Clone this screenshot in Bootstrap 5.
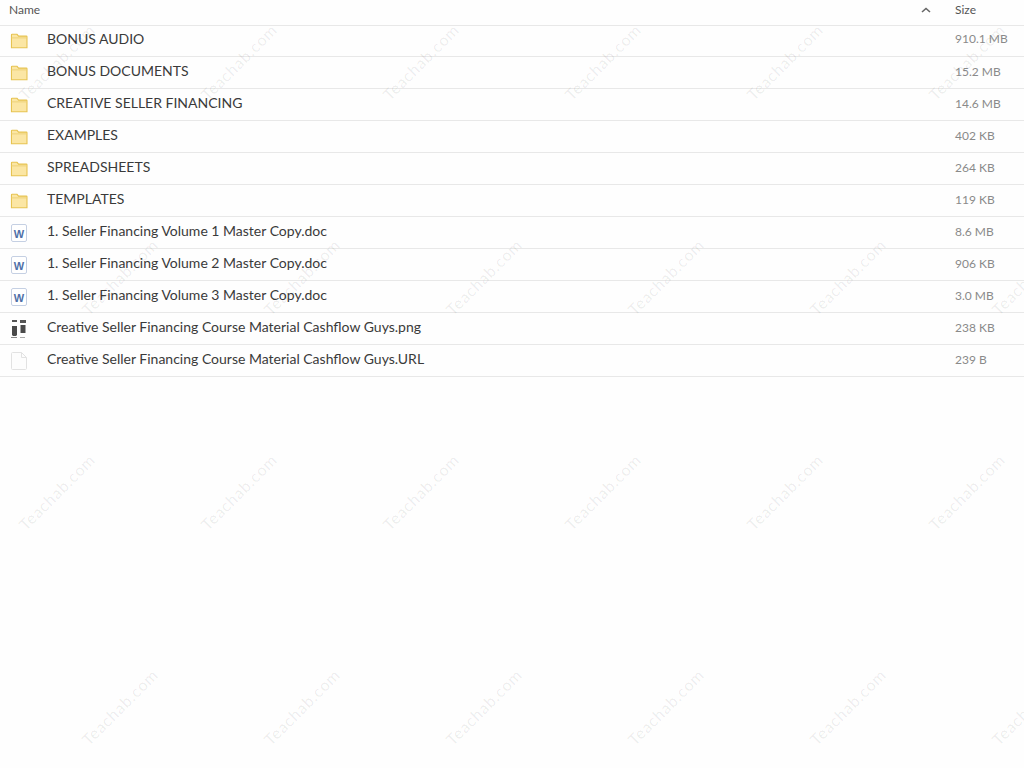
<!DOCTYPE html>
<html lang="en">
<head>
  <meta charset="UTF-8" />
  <meta name="viewport" content="width=device-width, initial-scale=1.0"/>
  <title>Files</title>
  <link href="https://cdn.jsdelivr.net/npm/bootstrap@5.3.3/dist/css/bootstrap.min.css" rel="stylesheet" />
  <style>
    body {
      font-family: Lato, "Liberation Sans", sans-serif;
      background-color: #fefefe;
      height: 768px;
      overflow: hidden;
    }
    .file-head {
      height: 26px;
      padding-bottom: 6px;
      font-size: 12px;
      color: #555;
      border-bottom: 1px solid #e8e8e8;
    }
    .file-row {
      height: 32px;
      font-size: 14px;
      color: #3a3a3a;
      border-bottom: 1px solid #e8e8e8;
    }
    .file-row:first-child { height: 31px; }
    .name-cell { padding-bottom: 4px; }
    .file-row .size-cell { padding-bottom: 2px; }
    .file-row:first-child .name-cell { padding-bottom: 6px; }
    .file-row:first-child .size-cell { padding-bottom: 4px; }
    .name-head { padding-left: 9px; }
    .sort-mark { width: 10px; height: 6px; margin-right: 24px; }
    .size-cell { width: 69px; flex: none; font-size: 12px; color: #8a8a8a; }
    .head-size { color: #555; }
    .icon-cell { width: 47px; flex: none; padding-left: 10px; }
    .water-layer { inset: 0; pointer-events: none; }
    .water-row { height: 215px; margin-left: -34px; }
    .water-row.shifted { margin-left: 29px; }
    .water-row.first { margin-top: -46px; }
    .water-mark {
      width: 182px;
      flex: none;
      text-align: center;
      font-size: 16px;
      letter-spacing: .8px;
      color: rgba(0, 0, 0, .075);
      transform: rotate(-45deg);
    }
  </style>
</head>
<body>
  <div id="list">
    <div class="file-head d-flex align-items-center">
      <div class="name-head flex-grow-1">Name</div>
      <svg class="sort-mark" viewBox="0 0 10 6"><path d="M1 5l4-3.5L9 5" fill="none" stroke="#666" stroke-width="1.6"/></svg>
      <div class="size-cell head-size">Size</div>
    </div>
    <div id="rows"></div>
  </div>

  <div class="water-layer position-absolute overflow-hidden" id="water"></div>

  <svg width="0" height="0" class="position-absolute">
    <symbol id="i-folder" viewBox="0 0 20 18">
      <path d="M1.5 16.5V2.2c0-.4.3-.7.7-.7h5.6l1.7 2h8.8c.4 0 .7.3.7.7v12.3z" fill="#fbe6a4" stroke="#e6c24f" stroke-width="1.2"/>
      <path d="M1.5 5.5h17" stroke="#ecce72" fill="none"/>
    </symbol>
    <symbol id="i-word" viewBox="-1 0 17 18">
      <rect x=".5" y=".5" width="15" height="17" rx="1.5" fill="#fff" stroke="#c5d0e3"/>
      <text x="8" y="13.5" text-anchor="middle" font-family="Liberation Sans, sans-serif" font-weight="700" font-size="11" fill="#4f6fa8">W</text>
    </symbol>
    <symbol id="i-png" viewBox="0 0 17 18">
      <rect x="2" y="0" width="5" height="2" fill="#555"/>
      <rect x="10" y="0" width="6" height="3" fill="#555"/>
      <path d="M2 6h5v9l-1 1H3l-1-1z" fill="#4a4a4a"/>
      <rect x="10.5" y="5" width="5" height="8" fill="#4a4a4a"/>
      <rect x="1" y="17" width="6" height="1" fill="#888"/>
      <rect x="10" y="17" width="5" height="1" fill="#aaa"/>
    </symbol>
    <symbol id="i-blank" viewBox="-1 0 17 18">
      <path d="M1.5.5h9l5 5v11c0 .6-.4 1-1 1h-13c-.6 0-1-.4-1-1v-15c0-.6.4-1 1-1z" fill="#fdfdfd" stroke="#e2e2e2"/>
      <path d="M10.5.5v5h5" fill="none" stroke="#e2e2e2"/>
    </symbol>
  </svg>

  <script src="https://cdn.jsdelivr.net/npm/bootstrap@5.3.3/dist/js/bootstrap.bundle.min.js"></script>
  <script>
    const files = [
      ["i-folder", "BONUS AUDIO", "910.1 MB"],
      ["i-folder", "BONUS DOCUMENTS", "15.2 MB"],
      ["i-folder", "CREATIVE SELLER FINANCING", "14.6 MB"],
      ["i-folder", "EXAMPLES", "402 KB"],
      ["i-folder", "SPREADSHEETS", "264 KB"],
      ["i-folder", "TEMPLATES", "119 KB"],
      ["i-word", "1. Seller Financing Volume 1 Master Copy.doc", "8.6 MB"],
      ["i-word", "1. Seller Financing Volume 2 Master Copy.doc", "906 KB"],
      ["i-word", "1. Seller Financing Volume 3 Master Copy.doc", "3.0 MB"],
      ["i-png", "Creative Seller Financing Course Material Cashflow Guys.png", "238 KB"],
      ["i-blank", "Creative Seller Financing Course Material Cashflow Guys.URL", "239 B"]
    ];
    const sizes = { "i-folder": [18, 16], "i-word": [17, 18], "i-png": [17, 18], "i-blank": [17, 18] };
    document.getElementById("rows").innerHTML = files.map(([icon, name, size]) => {
      const [w, h] = sizes[icon];
      return `<div class="file-row d-flex align-items-center">
        <div class="icon-cell d-flex"><svg width="${w}" height="${h}"><use href="#${icon}"/></svg></div>
        <div class="name-cell flex-grow-1">${name}</div>
        <div class="size-cell">${size}</div>
      </div>`;
    }).join("");

    let water = "";
    for (let r = 0; r < 4; r++) {
      water += `<div class="water-row d-flex align-items-center ${r % 2 ? "shifted" : ""} ${r === 0 ? "first" : ""}">`;
      for (let c = 0; c < 6; c++) water += `<div class="water-mark">Teachab.com</div>`;
      water += `</div>`;
    }
    document.getElementById("water").innerHTML = water;
  </script>
</body>
</html>
